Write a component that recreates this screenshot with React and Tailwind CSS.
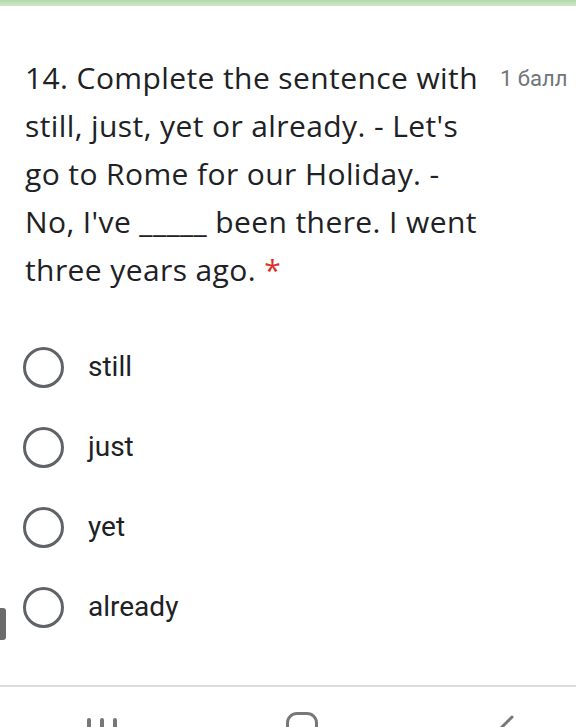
import { useState } from 'react';

const options = ['still', 'just', 'yet', 'already'];

const Radio = ({ label, checked, onSelect }) => (
  <button
    onClick={onSelect}
    className="flex h-[80px] w-full items-center text-left"
  >
    <span className="ml-[23px] flex h-[41px] w-[41px] items-center justify-center rounded-full border-[3px] border-[#5f6368]">
      {checked && <span className="h-[20px] w-[20px] rounded-full bg-[#673ab7]" />}
    </span>
    <span className="ml-[24px] text-[28px] text-[#202124] font-['Roboto',sans-serif]">
      {label}
    </span>
  </button>
);

export default function App() {
  const [answer, setAnswer] = useState(null);

  return (
    <div className="relative flex h-[727px] w-[576px] flex-col overflow-hidden bg-white">
      {/* top accent */}
      <div className="h-[6px] bg-gradient-to-b from-[#b3dbab] to-[#cfe6ca]" />

      {/* question */}
      <div className="flex pl-[25px] pt-[48px]">
        <p className="flex-1 text-[30px] leading-[48px] text-[#202124] font-['Open_Sans',sans-serif] tracking-[0.4px]">
          14. Complete the sentence with<br />
          still, just, yet or already. - Let's<br />
          go to Rome for our Holiday. -<br />
          No, I've _____ been there. I went<br />
          three years ago. <span className="text-[#d93025]">*</span>
        </p>
        <span className="w-[76px] pt-[1px] text-[22px] leading-[48px] text-[#70757a] font-['Roboto',sans-serif]">
          1 балл
        </span>
      </div>

      {/* options */}
      <div className="mt-[33px] flex flex-col">
        {options.map((o) => (
          <Radio key={o} label={o} checked={answer === o} onSelect={() => setAnswer(o)} />
        ))}
      </div>

      {/* side handle */}
      <div className="absolute left-0 top-[608px] h-[32px] w-[6px] rounded-r-[3px] bg-[#6b6b6b]" />

      <div className="mt-[38px] h-[2px] bg-[#dcdcdc]" />

      {/* nav bar */}
      <div className="relative flex-1">
        <div className="absolute left-[87px] top-[31px] flex gap-[9px]">
          <span className="h-[14px] w-[4px] rounded-sm bg-[#777]" />
          <span className="h-[14px] w-[4px] rounded-sm bg-[#777]" />
          <span className="h-[14px] w-[4px] rounded-sm bg-[#777]" />
        </div>
        <div className="absolute left-[286px] top-[25px] h-[32px] w-[32px] rounded-[11px] border-[3px] border-[#777]" />
        <svg className="absolute left-[494px] top-[28px]" width="24" height="24" viewBox="0 0 24 24">
          <path d="M18 2 L8 12 L18 22" fill="none" stroke="#777" strokeWidth="3" strokeLinecap="round" />
        </svg>
      </div>
    </div>
  );
}
